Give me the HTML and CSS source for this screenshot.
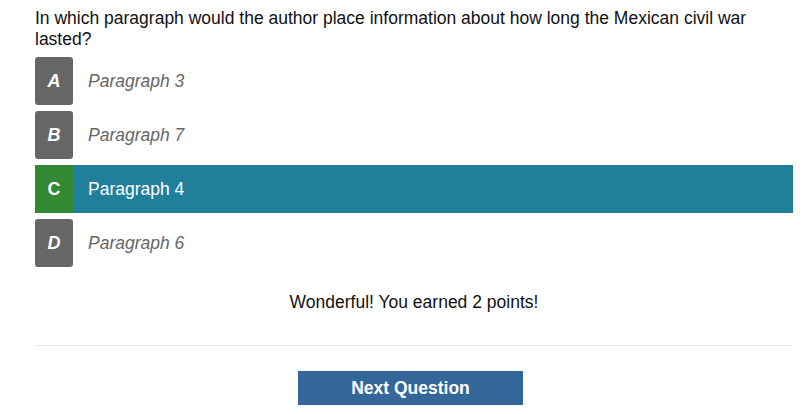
FILE: index.html
```html
<!DOCTYPE html>
<html>
<head>
<meta charset="utf-8">
<link rel="stylesheet" href="styles.css">
</head>
<body>
<div class="quiz">
  <p class="question">In which paragraph would the author place information about how long the Mexican civil war lasted?</p>
  <ul class="options">
    <li class="option"><span class="letter">A</span><span class="label">Paragraph 3</span></li>
    <li class="option"><span class="letter">B</span><span class="label">Paragraph 7</span></li>
    <li class="option correct"><span class="letter">C</span><span class="label">Paragraph 4</span></li>
    <li class="option"><span class="letter">D</span><span class="label">Paragraph 6</span></li>
  </ul>
  <p class="feedback">Wonderful! You earned 2 points!</p>
  <hr class="divider">
  <div class="actions"><button class="next">Next Question</button></div>
</div>
</body>
</html>
```
FILE: styles.css
```css
html, body { margin: 0; padding: 0; background: #fff; }
body { font-family: Arial, "Liberation Sans", sans-serif; color: #111; }
.quiz { padding: 8px 15px 0 35px; }
.question { margin: 0 0 7px 0; font-size: 17.5px; line-height: 21px; color: #111; }
.options { list-style: none; margin: 0; padding: 0; display: flex; flex-direction: column; gap: 6px; }
.option { display: flex; align-items: center; height: 48px; }
.letter { width: 38px; height: 48px; display: flex; align-items: center; justify-content: center; background: #666; color: #fff; font-weight: bold; font-style: italic; font-size: 18px; border-radius: 3px; }
.label { margin-left: 15px; font-size: 17.5px; font-style: italic; color: #666; }
.option.correct { background: #217f9b; }
.option.correct .letter { background: #338833; font-style: normal; border-radius: 0; }
.option.correct .label { color: #fff; font-style: normal; }
.feedback { margin: 24px 0 0 0; text-align: center; font-size: 17.5px; line-height: 22px; color: #111; }
.divider { margin: 32px 0 0 0; border: 0; border-top: 1px solid #e8e8e8; height: 0; }
.actions { display: flex; justify-content: center; padding: 25px 7px 0 0; }
.next { width: 225px; height: 34px; border: 0; background: #336699; color: #fff; font-family: Arial, "Liberation Sans", sans-serif; font-weight: bold; font-size: 17.5px; padding: 0; }
```
